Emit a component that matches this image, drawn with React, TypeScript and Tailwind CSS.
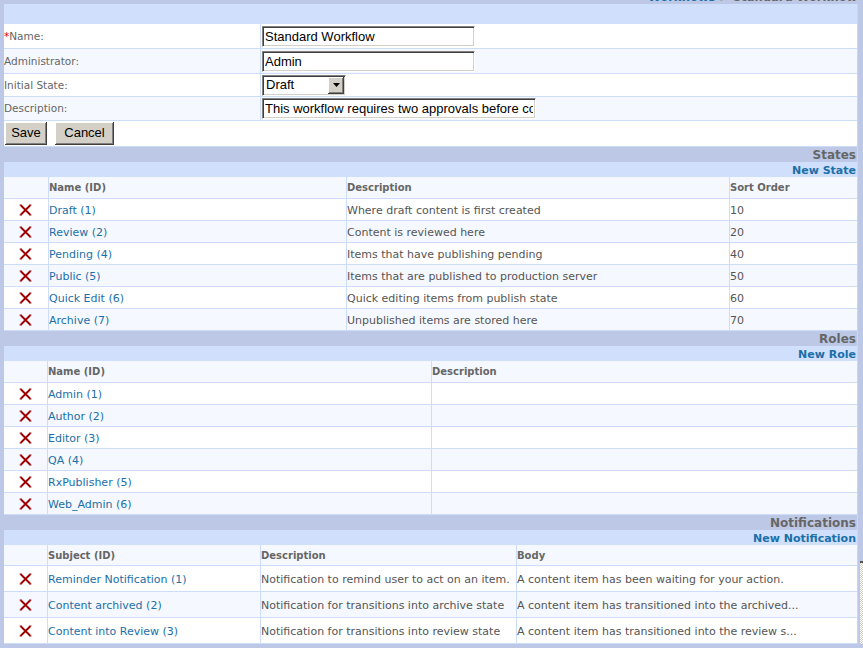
import React from 'react';

const link = 'text-[#1b6fa8]';

const states = [
    ['Draft (1)', 'Where draft content is first created', '10'],
    ['Review (2)', 'Content is reviewed here', '20'],
    ['Pending (4)', 'Items that have publishing pending', '40'],
    ['Public (5)', 'Items that are published to production server', '50'],
    ['Quick Edit (6)', 'Quick editing items from publish state', '60'],
    ['Archive (7)', 'Unpublished items are stored here', '70'],
];

const roles = ['Admin (1)', 'Author (2)', 'Editor (3)', 'QA (4)', 'RxPublisher (5)', 'Web_Admin (6)'];

const notifications = [
    ['Reminder Notification (1)', 'Notification to remind user to act on an item.', 'A content item has been waiting for your action.'],
    ['Content archived (2)', 'Notification for transitions into archive state', 'A content item has transitioned into the archived...'],
    ['Content into Review (3)', 'Notification for transitions into review state', 'A content item has transitioned into the review s...'],
];

function DeleteIcon() {
    return (
        <svg width="13" height="12" viewBox="0 0 13 12">
            <path d="M1.5 1 L11.5 11 M11.5 1 L1.5 11" stroke="#9e0000" strokeWidth="1.9" />
            <path d="M0.5 1 H2.5 M10.5 11 H12.5 M10.5 1 H12.5 M0.5 11 H2.5" stroke="#b03030" strokeWidth="1" />
        </svg>
    );
}

function SectionBand({ title, action }: { title: string; action: string }) {
    return (
        <>
            <div className="h-[15px] bg-[#bdc8e6] flex items-center justify-end pr-px pt-px text-[12px] font-bold text-[#666] leading-none">
                {title}
            </div>
            <div className={`h-[15px] bg-[#cfdffc] flex items-center justify-end pr-px pt-px text-[11px] font-bold leading-none ${link}`}>
                {action}
            </div>
        </>
    );
}

function Cell({ className = '', children }: { className?: string; children?: React.ReactNode }) {
    return <div className={`h-full flex items-center border-r border-[#cddcf8] whitespace-nowrap overflow-hidden ${className}`}>{children}</div>;
}

const inset =
    'border border-t-[#808080] border-l-[#808080] border-r-white border-b-white shadow-[inset_1px_1px_0_#404040,inset_-1px_-1px_0_#d4d0c8]';
const raised =
    'bg-[#d4d0c8] shadow-[inset_-1px_-1px_0_#404040,inset_1px_1px_0_#ffffff,inset_-2px_-2px_0_#808080]';
const winFont = "text-black text-[13px] font-['Liberation_Sans',Arial,sans-serif]";

function FormRow({ label, required, bg, h, children }: { label: string; required?: boolean; bg: string; h: string; children: React.ReactNode }) {
    return (
        <div className={`flex border-b border-[#cddcf8] ${bg} ${h}`}>
            <Cell className="w-[257px] pt-px text-[10.5px] text-[#666]">
                {required && <span className="text-[#e00000]">*</span>}
                {label}
            </Cell>
            <div className="flex-1 flex items-center pl-px">{children}</div>
        </div>
    );
}

export default function App() {
    return (
        <div className="w-[863px] h-[648px] overflow-hidden bg-[#bdc8e6] font-['DejaVu_Sans',Verdana,sans-serif] text-[11px] text-[#555]">
            {/* breadcrumb, scrolled mostly out of view */}
            <div className="h-[4px] overflow-hidden whitespace-nowrap pl-[648px] text-[11.5px] font-bold leading-[14px]">
                <div className="-mt-[10px]">
                    <span className={link}>Workflows</span>
                    <span className="text-[#666]"> &gt; Standard Workflow</span>
                </div>
            </div>

            <div className="flex h-[640px]">
                <div className="w-[4px]" />
                <div className="w-[854px] border-r border-[#c6d6f6] bg-white">
                    <div className="h-[20px] bg-[#cfdffc]" />

                    {/* Workflow form */}
                    <FormRow label="Name:" required bg="bg-white" h="h-[25px]">
                        <input readOnly value="Standard Workflow" className={`w-[213px] h-[21px] px-[2px] bg-white outline-none ${winFont} ${inset}`} />
                    </FormRow>
                    <FormRow label="Administrator:" bg="bg-[#f5f9ff]" h="h-[25px]">
                        <input readOnly value="Admin" className={`w-[213px] h-[21px] px-[2px] bg-white outline-none ${winFont} ${inset}`} />
                    </FormRow>
                    <FormRow label="Initial State:" bg="bg-white" h="h-[23px]">
                        <div className={`w-[84px] h-[21px] bg-white flex items-center justify-between ${inset}`}>
                            <span className={`pl-[3px] ${winFont}`}>Draft</span>
                            <span className={`w-[16px] h-[17px] mr-px flex items-center justify-center ${raised}`}>
                                <svg width="7" height="4" viewBox="0 0 7 4">
                                    <path d="M0 0 H7 L3.5 4 Z" fill="#000" />
                                </svg>
                            </span>
                        </div>
                    </FormRow>
                    <FormRow label="Description:" bg="bg-[#f5f9ff]" h="h-[24px]">
                        <input
                            readOnly
                            value="This workflow requires two approvals before content is made public"
                            className={`w-[274px] h-[21px] px-[2px] bg-white outline-none ${winFont} ${inset}`}
                        />
                    </FormRow>
                    <div className="h-[26px] border-b border-[#cddcf8] flex items-center gap-[8px] pl-px pb-px">
                        <button className={`w-[42px] h-[23px] ${winFont} ${raised}`}>Save</button>
                        <button className={`w-[59px] h-[23px] ${winFont} ${raised}`}>Cancel</button>
                    </div>

                    {/* States */}
                    <SectionBand title="States" action="New State" />
                    <div className="flex h-[22px] bg-[#f5f9ff] border-b border-[#cddcf8] font-bold text-[10px] text-[#666]">
                        <Cell className="w-[45px]" />
                        <Cell className="w-[298px]">Name (ID)</Cell>
                        <Cell className="w-[383px]">Description</Cell>
                        <Cell className="flex-1 border-r-0">Sort Order</Cell>
                    </div>
                    {states.map(([name, desc, order], i) => (
                        <div key={name} className={`flex h-[22px] border-b border-[#cddcf8] ${i % 2 ? 'bg-[#f5f9ff]' : 'bg-white'}`}>
                            <Cell className="w-[45px] justify-center pr-px">
                                <DeleteIcon />
                            </Cell>
                            <Cell className={`w-[298px] pt-[3px] ${link}`}>{name}</Cell>
                            <Cell className="w-[383px] pt-[3px]">{desc}</Cell>
                            <Cell className="flex-1 pt-[3px] border-r-0">{order}</Cell>
                        </div>
                    ))}

                    {/* Roles */}
                    <SectionBand title="Roles" action="New Role" />
                    <div className="flex h-[22px] bg-[#f5f9ff] border-b border-[#cddcf8] font-bold text-[10px] text-[#666]">
                        <Cell className="w-[44px]" />
                        <Cell className="w-[384px]">Name (ID)</Cell>
                        <Cell className="flex-1 border-r-0">Description</Cell>
                    </div>
                    {roles.map((name, i) => (
                        <div key={name} className={`flex h-[22px] border-b border-[#cddcf8] ${i % 2 ? 'bg-[#f5f9ff]' : 'bg-white'}`}>
                            <Cell className="w-[44px] justify-center">
                                <DeleteIcon />
                            </Cell>
                            <Cell className={`w-[384px] pt-[3px] ${link}`}>{name}</Cell>
                            <Cell className="flex-1 border-r-0" />
                        </div>
                    ))}

                    {/* Notifications */}
                    <SectionBand title="Notifications" action="New Notification" />
                    <div className="flex h-[21px] bg-[#f5f9ff] border-b border-[#cddcf8] font-bold text-[10px] text-[#666]">
                        <Cell className="w-[44px]" />
                        <Cell className="w-[213px]">Subject (ID)</Cell>
                        <Cell className="w-[256px]">Description</Cell>
                        <Cell className="flex-1 border-r-0">Body</Cell>
                    </div>
                    {notifications.map(([subject, desc, body], i) => (
                        <div key={subject} className={`flex h-[26px] border-b border-[#cddcf8] ${i % 2 ? 'bg-[#f5f9ff]' : 'bg-white'}`}>
                            <Cell className="w-[44px] justify-center">
                                <DeleteIcon />
                            </Cell>
                            <Cell className={`w-[213px] pt-[3px] ${link}`}>{subject}</Cell>
                            <Cell className="w-[256px] pt-[3px]">{desc}</Cell>
                            <Cell className="flex-1 pt-[3px] border-r-0">{body}</Cell>
                        </div>
                    ))}
                </div>

                {/* right gutter with the edge of a scrollbar */}
                <div className="flex-1 flex flex-col pl-[2px]">
                    <div className="flex-1" />
                    <div className="h-[83px] border-t-2 border-[#555] bg-[repeating-conic-gradient(#ffffff_0_25%,#d4d0c8_0_50%)] bg-size-[2px_2px]" />
                </div>
            </div>
        </div>
    );
}
